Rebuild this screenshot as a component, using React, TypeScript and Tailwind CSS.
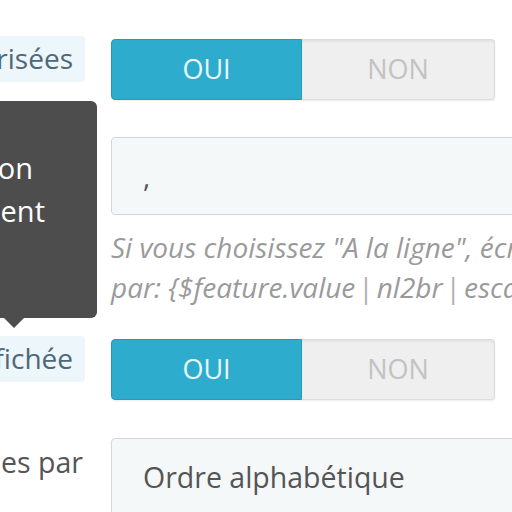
import React from "react";

function Toggle() {
  return (
    <div className="flex h-[61px] w-[384px] rounded-[4px] shadow-[0_1px_2px_rgba(0,0,0,0.08)]">
      <div className="flex w-[191px] items-center justify-center rounded-l-[4px] border border-[#2898b8] bg-[#2eacce] text-[27px] text-[#eaf8fc]">
        OUI
      </div>
      <div className="flex flex-1 items-center justify-center rounded-r-[4px] border border-l-0 border-[#dcdcdc] bg-[#efefef] text-[27px] text-[#c2c2c2] shadow-[inset_0_2px_2px_rgba(0,0,0,0.05)]">
        NON
      </div>
    </div>
  );
}

function TipLabel({ text }: { text: string }) {
  return (
    <div className="flex justify-end overflow-hidden">
      <span className="h-[46px] whitespace-nowrap rounded-[4px] bg-[#edf6fa] pl-3 pr-[12px] text-[28px] leading-[45px] text-[#4f6878]">
        {text}
      </span>
    </div>
  );
}

function Pipe() {
  return <span className="mx-[3px] not-italic text-[#b0b0b0]">|</span>;
}

export default function App() {
  return (
    <div
      className="relative h-[512px] w-[512px] overflow-hidden bg-white"
      style={{ fontFamily: '"Open Sans", "Noto Sans", sans-serif' }}
    >
      <div className="flex flex-col pt-[36px]">
        {/* Valeurs autorisées */}
        <div className="grid grid-cols-[85px_1fr] gap-x-[26px]">
          <TipLabel text="Valeurs autorisées" />
          <div className="pt-[3px]">
            <Toggle />
          </div>
        </div>

        {/* Séparateur */}
        <div className="mt-[37px] grid grid-cols-[85px_1fr] gap-x-[26px]">
          <div />
          <div>
            <div className="flex h-[78px] w-[440px] items-center rounded-[4px] border border-[#cfd8dc] bg-[#f5f8f9] pl-[31px] text-[28px] text-[#555]">
              ,
            </div>
            <p className="mt-[12px] w-[500px] whitespace-nowrap text-[28px] italic leading-[40px] text-[#9a9a9a]">
              Si vous choisissez "A la ligne", écrivez
              <br />
              par: {"{"}$feature.value<Pipe />nl2br<Pipe />escape{"}"}
            </p>
          </div>
        </div>

        {/* Valeur affichée */}
        <div className="mt-[29px] grid grid-cols-[85px_1fr] gap-x-[26px]">
          <TipLabel text="Valeur affichée" />
          <div className="pt-[3px]">
            <Toggle />
          </div>
        </div>

        {/* Tri */}
        <div className="mt-[38px] grid grid-cols-[85px_1fr] gap-x-[26px]">
          <div className="flex justify-end overflow-hidden pt-[5px]">
            <span className="whitespace-nowrap pr-[2px] text-[28.5px] leading-[38px] text-[#555]">Valeurs triées par</span>
          </div>
          <div className="flex h-[78px] w-[440px] items-center rounded-[4px] border border-[#cfd8dc] bg-[#f5f8f9] pl-[31px] text-[28.5px] text-[#555]">
            Ordre alphabétique
          </div>
        </div>
      </div>

      {/* Tooltip */}
      <div className="absolute left-[-400px] top-[101px] w-[497px]">
        <div className="h-[217px] rounded-[6px] bg-[#4d4d4d] pt-[45px] text-[29px] leading-[43px] text-white">
          <div className="whitespace-nowrap pr-[64px] text-right">Caractère de séparation</div>
          <div className="whitespace-nowrap pr-[52px] text-right">utilisé seulement</div>
        </div>
        <div className="ml-[404px] h-0 w-0 border-x-[10px] border-t-[10px] border-x-transparent border-t-[#4d4d4d]" />
      </div>
    </div>
  );
}
